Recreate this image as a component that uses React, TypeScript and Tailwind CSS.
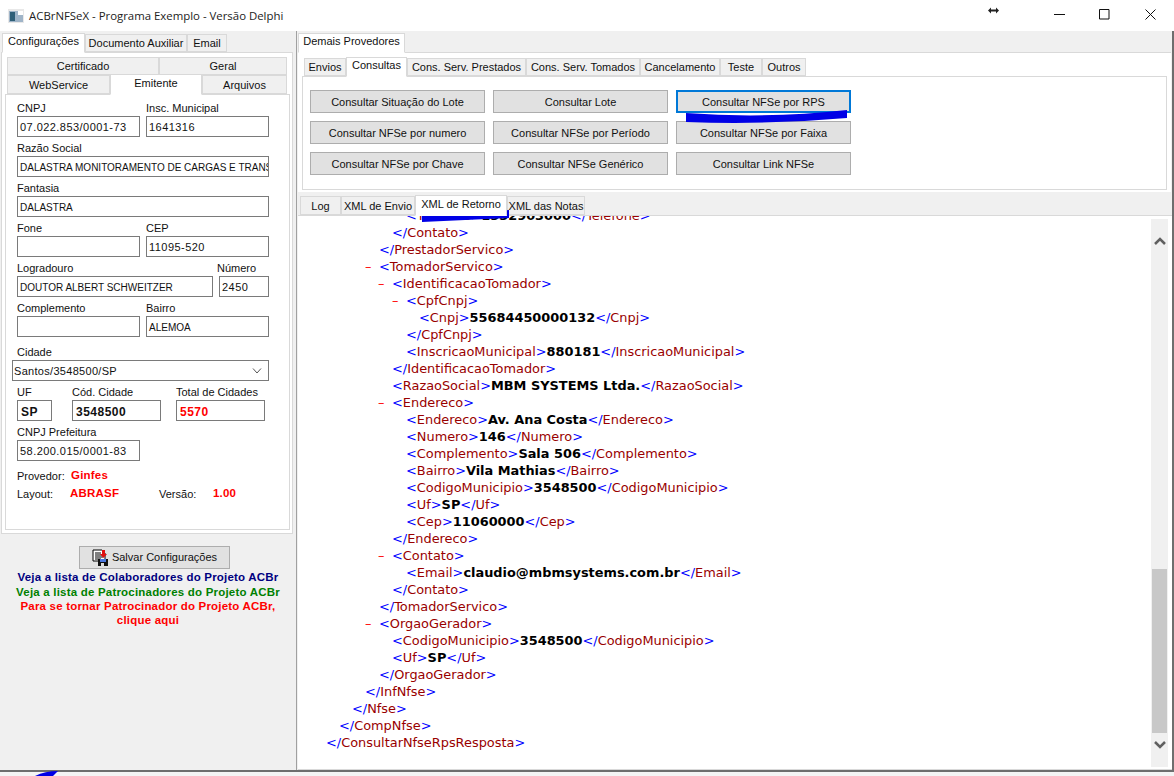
import type { ReactNode } from 'react'

const ui = "font-['Liberation_Sans',sans-serif] text-[11px] text-[#111]"
const boldValue = "pl-[3px] font-['Liberation_Sans'] text-[12px] font-bold tracking-[0.5px]"
const boldRed = "font-['Liberation_Sans'] text-[11.5px] font-bold tracking-[0.2px] text-[#ff0000]"
const caps = 'text-[10px]'
const digits = 'tracking-[0.45px]'
const levels = ['pl-[28px]', 'pl-[41px]', 'pl-[54px]', 'pl-[67px]', 'pl-[81px]', 'pl-[94px]', 'pl-[108px]', 'pl-[121px]']

type Row = { level: number; open?: string; value?: string; close?: string; fold?: boolean }

const rows: Row[] = [
  { level: 6, open: 'Telefone', value: '1332903000', close: 'Telefone' },
  { level: 5, close: 'Contato' },
  { level: 4, close: 'PrestadorServico' },
  { level: 4, open: 'TomadorServico', fold: true },
  { level: 5, open: 'IdentificacaoTomador', fold: true },
  { level: 6, open: 'CpfCnpj', fold: true },
  { level: 7, open: 'Cnpj', value: '55684450000132', close: 'Cnpj' },
  { level: 6, close: 'CpfCnpj' },
  { level: 6, open: 'InscricaoMunicipal', value: '880181', close: 'InscricaoMunicipal' },
  { level: 5, close: 'IdentificacaoTomador' },
  { level: 5, open: 'RazaoSocial', value: 'MBM SYSTEMS Ltda.', close: 'RazaoSocial' },
  { level: 5, open: 'Endereco', fold: true },
  { level: 6, open: 'Endereco', value: 'Av. Ana Costa', close: 'Endereco' },
  { level: 6, open: 'Numero', value: '146', close: 'Numero' },
  { level: 6, open: 'Complemento', value: 'Sala 506', close: 'Complemento' },
  { level: 6, open: 'Bairro', value: 'Vila Mathias', close: 'Bairro' },
  { level: 6, open: 'CodigoMunicipio', value: '3548500', close: 'CodigoMunicipio' },
  { level: 6, open: 'Uf', value: 'SP', close: 'Uf' },
  { level: 6, open: 'Cep', value: '11060000', close: 'Cep' },
  { level: 5, close: 'Endereco' },
  { level: 5, open: 'Contato', fold: true },
  { level: 6, open: 'Email', value: 'claudio@mbmsystems.com.br', close: 'Email' },
  { level: 5, close: 'Contato' },
  { level: 4, close: 'TomadorServico' },
  { level: 4, open: 'OrgaoGerador', fold: true },
  { level: 5, open: 'CodigoMunicipio', value: '3548500', close: 'CodigoMunicipio' },
  { level: 5, open: 'Uf', value: 'SP', close: 'Uf' },
  { level: 4, close: 'OrgaoGerador' },
  { level: 3, close: 'InfNfse' },
  { level: 2, close: 'Nfse' },
  { level: 1, close: 'CompNfse' },
  { level: 0, close: 'ConsultarNfseRpsResposta' },
]

function Tab({ label, active, className }: { label: string; active?: boolean; className: string }) {
  return (
    <div
      className={`flex items-center justify-center border border-[#d9d9d9] whitespace-nowrap ${
        active ? 'z-10 -mb-px bg-white pb-[3px] border-b-white' : 'bg-[#f0f0f0]'
      } ${className}`}
    >
      {label}
    </div>
  )
}

function Field({ label, value, className, labelClass, valueClass }: { label: string; value?: string; className: string; labelClass?: string; valueClass?: string }) {
  return (
    <div className={className}>
      <div className={`flex h-[17px] items-center whitespace-nowrap pt-[2px] ${labelClass ?? ''}`}>{label}</div>
      <div className={`flex h-[21px] items-center overflow-hidden whitespace-nowrap border border-[#7a7a7a] bg-white pl-[2px] pt-[2px] ${valueClass ?? ''}`}>
        {value}
      </div>
    </div>
  )
}

function Btn({ children, focused }: { children: ReactNode; focused?: boolean }) {
  return (
    <div className={`flex h-[23px] items-center justify-center bg-[#e1e1e1] pt-[2px] ${focused ? 'border-2 border-[#0078d7]' : 'border border-[#adadad]'}`}>
      {children}
    </div>
  )
}

function XmlLine({ row }: { row: Row }) {
  return (
    <div className={`h-[17.03px] whitespace-nowrap leading-[17px] ${levels[row.level]}`}>
      {row.fold && <span className="-ml-[14px] inline-block w-[14px] text-[#ff0000]">–</span>}
      {row.open && (
        <>
          <span className="text-[#0000ff]">&lt;</span>
          <span className="text-[#990000]">{row.open}</span>
          <span className="text-[#0000ff]">&gt;</span>
        </>
      )}
      {row.value && <span className="font-bold text-black">{row.value}</span>}
      {row.close && (
        <>
          <span className="text-[#0000ff]">&lt;/</span>
          <span className="text-[#990000]">{row.close}</span>
          <span className="text-[#0000ff]">&gt;</span>
        </>
      )}
    </div>
  )
}

function LeftPanel() {
  return (
    <div className="w-[297px] shrink-0 border-r border-[#a0a0a0]">
      <div className="ml-[2px] flex h-[21px] items-end">
        <Tab label="Configurações" active className="h-[20px] w-[83px]" />
        <Tab label="Documento Auxiliar" className="h-[18px] w-[102px]" />
        <Tab label="Email" className="h-[18px] w-[40px]" />
      </div>
      <div className="ml-px h-[482px] w-[292px] border border-[#d9d9d9] bg-white pt-[4px]">
        <div className="ml-[5px] flex h-[18px] w-[280px]">
          <Tab label="Certificado" className="h-[18px] w-[152px]" />
          <Tab label="Geral" className="h-[18px] w-[128px]" />
        </div>
        <div className="ml-[5px] flex h-[19px] w-[280px] items-end">
          <Tab label="WebService" className="h-[19px] w-[103px] pt-[2px]" />
          <Tab label="Emitente" active className="h-[21px] w-[92px]" />
          <Tab label="Arquivos" className="h-[19px] w-[85px] pt-[2px]" />
        </div>
        <div className="ml-[3px] h-[436px] w-[285px] border border-[#d9d9d9] bg-white pl-[11px] pt-[4px]">
          <div className="flex gap-[6px]">
            <Field label="CNPJ" value="07.022.853/0001-73" className="w-[123px]" valueClass={digits} />
            <Field label="Insc. Municipal" value="1641316" className="w-[123px]" valueClass={digits} />
          </div>
          <Field label="Razão Social" value="DALASTRA MONITORAMENTO DE CARGAS E TRANSPORTES" className="mt-[2px] w-[252px]" valueClass={caps} />
          <Field label="Fantasia" value="DALASTRA" className="mt-[2px] w-[252px]" valueClass={caps} />
          <div className="mt-[2px] flex gap-[6px]">
            <Field label="Fone" className="w-[123px]" />
            <Field label="CEP" value="11095-520" className="w-[123px]" valueClass={digits} />
          </div>
          <div className="mt-[2px] flex gap-[6px]">
            <Field label="Logradouro" value="DOUTOR ALBERT SCHWEITZER" className="w-[196px]" valueClass={caps} />
            <Field label="Número" value="2450" className="w-[50px]" labelClass="-ml-[2px]" valueClass={digits} />
          </div>
          <div className="mt-[2px] flex gap-[6px]">
            <Field label="Complemento" className="w-[123px]" />
            <Field label="Bairro" value="ALEMOA" className="w-[123px]" valueClass={caps} />
          </div>
          <div className="mt-[6px] flex h-[17px] items-center pt-[2px]">Cidade</div>
          <div className="-ml-[5px] flex h-[21px] w-[257px] items-center justify-between border border-[#7a7a7a] bg-white pl-px pr-[6px] pt-px tracking-[0.3px]">
            Santos/3548500/SP
            <svg width="10" height="6" viewBox="0 0 10 6" fill="none" stroke="#555" strokeWidth="1">
              <path d="M1 .5 5 5 9 .5" />
            </svg>
          </div>
          <div className="mt-[2px] flex">
            <Field label="UF" value="SP" className="w-[35px]" valueClass={boldValue} />
            <Field label="Cód. Cidade" value="3548500" className="ml-[20px] w-[89px]" valueClass={boldValue} />
            <Field label="Total de Cidades" value="5570" className="ml-[15px] w-[89px]" valueClass={`${boldValue} text-[#ff0000]`} />
          </div>
          <Field label="CNPJ Prefeitura" value="58.200.015/0001-83" className="mt-[2px] w-[123px]" valueClass={digits} />
          <div className="mt-[7px] flex h-[16px] items-center">
            <span className="w-[54px]">Provedor:</span>
            <span className={boldRed}>Ginfes</span>
          </div>
          <div className="mt-[2px] flex h-[16px] items-center">
            <span className="w-[53px]">Layout:</span>
            <span className={`w-[89px] ${boldRed}`}>ABRASF</span>
            <span className="w-[54px]">Versão:</span>
            <span className={boldRed}>1.00</span>
          </div>
        </div>
      </div>
      <div className="ml-[79px] mt-[12px] flex h-[23px] w-[151px] items-center justify-center gap-[3px] border border-[#adadad] bg-[#e1e1e1]">
        <svg width="17" height="17" viewBox="0 0 17 17">
          <path d="M1 1h9l3 3v8H1z" fill="#fff" stroke="#000" />
          <path d="M3 4h6M3 6h8M3 8h8M3 10h6" stroke="#000" />
          <path d="M10 1h3v4h2l-3.500 4L8 5h2z" fill="#e01010" />
          <path d="M6 10h10v7H6z" fill="#111" />
          <path d="M8 10h6v3H8z" fill="#4a78e0" />
          <path d="M9 14h3v3H9z" fill="#ddd" />
        </svg>
        Salvar Configurações
      </div>
      <div className="mt-px w-[296px] text-center font-['Liberation_Sans'] text-[11.5px] font-bold tracking-[0.2px]">
        <div className="mx-auto h-[15px] w-[268px] overflow-hidden whitespace-nowrap leading-[15px] text-[#000080]">Veja a lista de Colaboradores do Projeto ACBr</div>
        <div className="mx-auto h-[15px] w-[270px] overflow-hidden whitespace-nowrap leading-[15px] text-[#008000]">Veja a lista de Patrocinadores do Projeto ACBr</div>
        <div className="mx-auto w-[270px] leading-[13.500px] text-[#ff0000]">
          Para se tornar Patrocinador do Projeto ACBr,
          <br />
          clique aqui
        </div>
      </div>
    </div>
  )
}

function RightPanel() {
  return (
    <div className="ml-px flex min-w-0 flex-1 flex-col">
      <div className="flex h-[21px] items-end">
        <Tab label="Demais Provedores" active className="h-[20px] w-[107px]" />
      </div>
      <div className="h-[140px] w-[873px] border-t border-[#d9d9d9] bg-white pt-[4px]">
        <div className="ml-[6px] flex h-[19px] items-end">
          <Tab label="Envios" className="h-[18px] w-[42px]" />
          <Tab label="Consultas" active className="h-[20px] w-[61px]" />
          <Tab label="Cons. Serv. Prestados" className="h-[18px] w-[119px]" />
          <Tab label="Cons. Serv. Tomados" className="h-[18px] w-[114px]" />
          <Tab label="Cancelamento" className="h-[18px] w-[80px]" />
          <Tab label="Teste" className="h-[18px] w-[42px]" />
          <Tab label="Outros" className="h-[18px] w-[44px]" />
        </div>
        <div className="ml-[4px] h-[114px] w-[865px] border border-[#d9d9d9] px-[7px] pt-[13px]">
          <div className="grid grid-cols-[175px_175px_175px] gap-x-[8px] gap-y-[8px]">
            <Btn>Consultar Situação do Lote</Btn>
            <Btn>Consultar Lote</Btn>
            <Btn focused>Consultar NFSe por RPS</Btn>
            <Btn>Consultar NFSe por numero</Btn>
            <Btn>Consultar NFSe por Período</Btn>
            <Btn>Consultar NFSe por Faixa</Btn>
            <Btn>Consultar NFSe por Chave</Btn>
            <Btn>Consultar NFSe Genérico</Btn>
            <Btn>Consultar Link NFSe</Btn>
          </div>
        </div>
      </div>
      <div className="mt-[3px] flex h-[20px] items-end pl-[2px]">
        <Tab label="Log" className="h-[19px] w-[41px] pt-[2px]" />
        <Tab label="XML de Envio" className="h-[19px] w-[74px] pt-[2px]" />
        <Tab label="XML de Retorno" active className="h-[21px] w-[92px]" />
        <Tab label="XML das Notas" className="h-[19px] w-[78px] pt-[2px]" />
      </div>
      <div className="flex h-[555px] w-[874px] border-y border-t-[#d9d9d9] border-b-[#d9d9d9] bg-white">
        <div className="min-w-0 flex-1 overflow-hidden font-['DejaVu_Sans',sans-serif] text-[12.9px]">
          <div className="-mt-[9px]">
            {rows.map((row, i) => (
              <XmlLine key={i} row={row} />
            ))}
          </div>
        </div>
        <div className="mb-[2px] mr-[4px] mt-[3px] flex w-[17px] shrink-0 flex-col items-center bg-[#f0f0f0]">
          <div className="flex h-[43px] items-center">
            <svg width="12" height="8" viewBox="0 0 12 8" fill="none" stroke="#606060" strokeWidth="2.500">
              <path d="M1 7 6 2l5 5" />
            </svg>
          </div>
          <div className="flex-1" />
          <div className="h-[164px] w-[15px] bg-[#c8c8c8]" />
          <div className="flex h-[34px] items-start pt-[8px]">
            <svg width="12" height="8" viewBox="0 0 12 8" fill="none" stroke="#606060" strokeWidth="2.500">
              <path d="M1 1l5 5 5-5" />
            </svg>
          </div>
        </div>
      </div>
    </div>
  )
}

export default function App() {
  return (
    <div className={`relative h-[776px] w-[1174px] overflow-hidden bg-[#f4f4f4] ${ui}`}>
      <div className="flex h-[31px] items-center bg-white">
        <svg className="ml-[8px]" width="16" height="14" viewBox="0 0 16 14">
          <path d="M0 0h16v14H0z" fill="#e8e8e8" />
          <path d="M1 2h14v11H1z" fill="#9fb4c8" />
          <path d="M2 3h5v9H2z" fill="#2f5f78" />
          <path d="M10 2h5v4h-5z" fill="#fff" />
        </svg>
        <span className="ml-[5px] w-[255px] whitespace-nowrap font-['Open_Sans'] text-[11.4px] text-[#222]">ACBrNFSeX - Programa Exemplo - Versão Delphi</span>
        <svg className="-mt-[11px] ml-[704px]" width="11" height="7" viewBox="0 0 11 7" fill="#222">
          <path d="M0 3.500 3 .5v2h5v-2l3 3-3 3v-2H3v2z" />
        </svg>
        <svg className="-mt-[2px] ml-[55px]" width="11" height="2" viewBox="0 0 11 2">
          <path d="M0 .5h11" stroke="#111" />
        </svg>
        <svg className="-mt-[2px] ml-[34px]" width="11" height="11" viewBox="0 0 11 11" fill="none" stroke="#111">
          <path d="M.5.5h9.500v9.500H.5z" />
        </svg>
        <svg className="-mt-[2px] ml-[35px]" width="11" height="11" viewBox="0 0 11 11" fill="none" stroke="#111">
          <path d="M.5.5l10 10M10.500.5l-10 10" />
        </svg>
      </div>
      <div className="flex h-[741px] w-[1174px] border-b-2 border-r-2 border-[#6e6e6e] bg-[#f0f0f0]">
        <LeftPanel />
        <RightPanel />
      </div>

      {/* marker strokes drawn over the screenshot */}
      <svg className="absolute left-0 top-0" width="1174" height="776" viewBox="0 0 1174 776" fill="#0000e6">
        <path d="M686 113q80 6 161-3v8q-80 7-161 4z" />
        <path d="M422 214q44 0 87-4v8q-44 2-87 4z" />
        <path d="M35 776q10-5 23-5l-5 5z" />
      </svg>
    </div>
  )
}
